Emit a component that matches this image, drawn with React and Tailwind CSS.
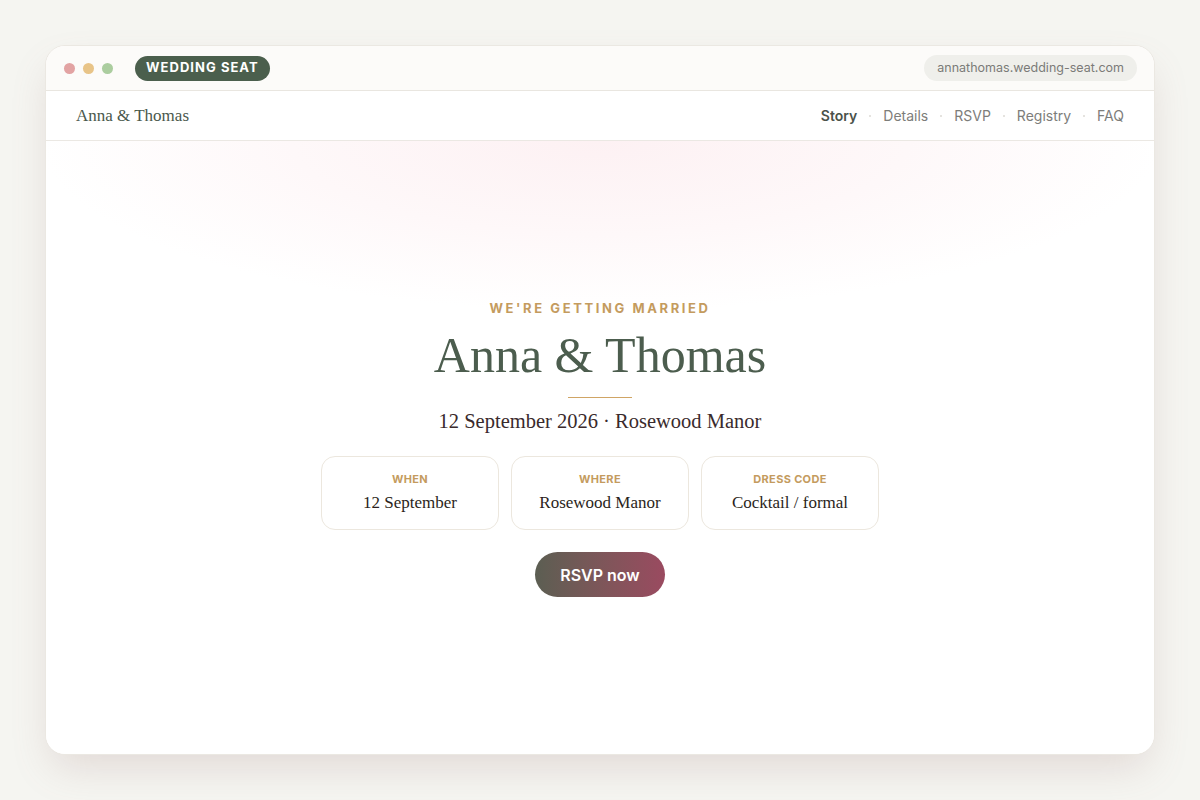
const serif = { fontFamily: '"Liberation Serif", "DejaVu Serif", serif' };

const navItems = ["Story", "Details", "RSVP", "Registry", "FAQ"];

const facts = [
  { label: "When", value: "12 September" },
  { label: "Where", value: "Rosewood Manor" },
  { label: "Dress code", value: "Cocktail / formal" },
];

const App = () => {
  return (
    <div
      className="w-full h-[800px] bg-[#f5f5f1] p-[45px] font-['Inter',sans-serif]"
    >
      <div className="w-full h-full bg-white rounded-[20px] border border-[#ebe8e2] overflow-hidden flex flex-col shadow-[0_18px_40px_-8px_rgba(150,110,110,0.22)]">
        {/* Window chrome */}
        <div className="h-[45px] shrink-0 bg-[#fcfbf9] border-b border-[#e9e6e0] flex items-center pl-[18px] pr-[17px]">
          <div className="flex items-center gap-2">
            <span className="w-[11px] h-[11px] rounded-full bg-[#e2a3a3]" />
            <span className="w-[11px] h-[11px] rounded-full bg-[#e8c488]" />
            <span className="w-[11px] h-[11px] rounded-full bg-[#abcd9f]" />
          </div>
          <span className="ml-[22px] h-[25px] px-[11px] rounded-full bg-[#4b5f4d] text-white text-[13px] font-bold tracking-[0.08em] flex items-center">
            WEDDING SEAT
          </span>
          <span className="ml-auto h-[26px] px-[13px] rounded-full bg-[#efefeb] text-[12.5px] text-[#7b7b78] flex items-center">
            annathomas.wedding-seat.com
          </span>
        </div>

        {/* Site nav */}
        <div className="h-[50px] shrink-0 border-b border-[#ebe8e3] flex items-center justify-between pl-[30px] pr-[30px]">
          <span style={serif} className="text-[17px] text-[#4a584c]">
            Anna &amp; Thomas
          </span>
          <nav className="flex items-center gap-[12px] text-[14px]">
            {navItems.map((item, i) => (
              <div key={item} className="flex items-center gap-[12px]">
                {i > 0 && <span className="w-[2px] h-[2px] rounded-full bg-[#dcdad4]" />}
                <span className={i === 0 ? "font-semibold text-[#4b524a]" : "text-[#7d7d7a]"}>{item}</span>
              </div>
            ))}
          </nav>
        </div>

        {/* Hero */}
        <div className="flex-1 flex flex-col items-center pt-[158px] bg-[radial-gradient(ellipse_560px_170px_at_50%_0%,#fdf1f3_0%,#fef8f9_55%,#ffffff_100%)]">
          <p className="text-[13px] font-bold tracking-[0.2em] text-[#c49b5e]">WE&apos;RE GETTING MARRIED</p>
          <h1 style={serif} className="mt-[8px] text-[50px] leading-[56px] text-[#4c5d4e]">
            Anna &amp; Thomas
          </h1>
          <div className="mt-[14px] w-16 h-px bg-[#d0a565]" />
          <p style={serif} className="mt-[8px] text-[20.5px] text-[#3a2a2c]">
            12 September 2026 · Rosewood Manor
          </p>

          <div className="mt-[20px] flex gap-[12px]">
            {facts.map((f) => (
              <div
                key={f.label}
                className="w-[178px] h-[74px] rounded-[14px] border border-[#ece7de] bg-white flex flex-col items-center justify-center gap-[3px]"
              >
                <span className="text-[11px] font-bold uppercase tracking-[0.03em] text-[#c49b5e]">{f.label}</span>
                <span style={serif} className="text-[17px] text-[#2b1f20]">
                  {f.value}
                </span>
              </div>
            ))}
          </div>

          <button
            type="button"
            className="mt-[22px] w-[130px] h-[45px] rounded-full bg-gradient-to-r from-[#5b5e52] to-[#9a4a60] text-white text-[16px] font-semibold"
          >
            RSVP now
          </button>
        </div>
      </div>
    </div>
  );
};

export default App;
